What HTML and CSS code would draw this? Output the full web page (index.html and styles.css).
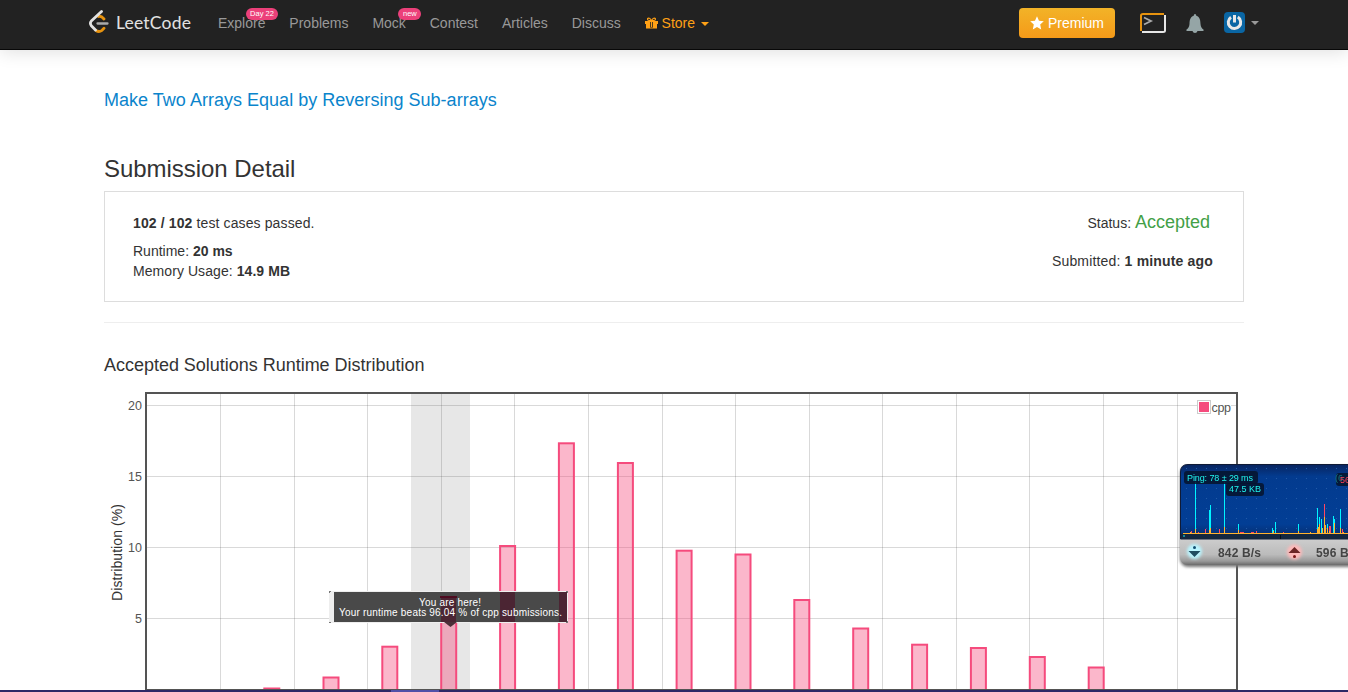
FILE: index.html
```html
<!DOCTYPE html>
<html lang="en">
<head>
<meta charset="utf-8">
<title>Submission Detail - LeetCode</title>
<link rel="stylesheet" href="styles.css">
</head>
<body>
<header class="navbar">
  <a class="brand">
    <svg class="brand-mark" width="22" height="26" viewBox="0 0 22 26" fill="none" stroke-linecap="round" stroke-linejoin="round" stroke-width="2.8">
      <path d="M10.500 8.500Q13 7.500 16 11M8 22.500Q11 24.500 14 22.300L16 20.300" stroke="#e7930f"/>
      <path d="M9.500 15.500H19.500" stroke="#aaa" stroke-width="2.300"/>
      <path d="M13.500 3.500L3.300 13Q1.500 15.300 3.300 17.700L7.500 22" stroke="#e2e2e2"/>
    </svg>
    <span class="brand-name">LeetCode</span>
  </a>
  <nav class="links">
    <a>Explore<span class="badge badge-day">Day 22</span></a>
    <a>Problems</a>
    <a>Mock<span class="badge badge-new">new</span></a>
    <a>Contest</a>
    <a>Articles</a>
    <a>Discuss</a>
    <a class="store">
      <svg width="13" height="12" viewBox="0 0 13 12"><path fill="#ffa116" fill-rule="evenodd" d="M0 4H4C1.500 4 1.300.5 3.500.5C5 .5 5.700 1.500 6.500 2.700C7.300 1.500 8 .5 9.500.5C11.700.5 11.500 4 9 4H13V7H12V11.500H1V7H0ZM3.700 1.800C2.800 1.800 2.900 3 4 3H5.500C5 2.400 4.500 1.800 3.700 1.800ZM9.300 1.800C8.500 1.800 8 2.400 7.500 3H9C10.100 3 10.200 1.800 9.300 1.800ZM5 5V10.500H8V5Z"/><path fill="#ffa116" d="M5.800 5H7.200V10H5.800Z"/></svg>
      <span>Store</span><i class="caret"></i>
    </a>
  </nav>
  <div class="tools">
    <a class="premium"><svg width="14" height="14" viewBox="0 0 14 14"><path fill="#fff" d="M7 .3L9 4.800L13.800 5.300L10.200 8.600L11.200 13.500L7 11L2.800 13.500L3.800 8.600L.2 5.300L5 4.800Z"/></svg>Premium</a>
    <svg class="console" width="26" height="22" viewBox="0 0 26 22" fill="none" stroke-width="2">
      <path d="M1 19V3.500Q1 2 3 2H24" stroke="#e7930f"/>
      <path d="M25 3V18.500Q25 20 23 20H2" stroke="#e6e6e6"/>
      <path d="M4 5.500L11 9L4 12.500" stroke="#aaa" stroke-width="1.800"/>
    </svg>
    <svg class="bell" width="18" height="20" viewBox="0 0 18 20"><path fill="#95a5a6" d="M9 0Q10.300 0 10.300 1.700C14 3 14.300 6 14.500 10C14.700 13 16 14.500 17.500 15.500V17H.5V15.500C2 14.500 3.300 13 3.500 10C3.700 6 4 3 7.700 1.700Q7.700 0 9 0ZM6.500 17H11.500Q11 19 9 19Q7 19 6.500 17Z"/></svg>
    <svg class="avatar" width="21" height="21" viewBox="0 0 21 21"><rect width="21" height="21" rx="4" fill="#0a66a4"/><path d="M7 5.200A6.200 6.200 0 1 0 13.800 5.100M10.500 3V10.500" fill="none" stroke="#e8e8e8" stroke-width="3"/></svg>
    <i class="caret caret-grey"></i>
  </div>
</header>

<main class="content">
  <h4 class="problem">Make Two Arrays Equal by Reversing Sub-arrays</h4>
  <h3 class="heading">Submission Detail</h3>
  <section class="detail">
    <div class="col">
      <p class="passed"><b>102 / 102</b> test cases passed.</p>
      <p>Runtime: <b>20 ms</b></p>
      <p class="memory">Memory Usage: <b>14.9 MB</b></p>
    </div>
    <div class="col col-right">
      <p class="status">Status: <span class="accepted">Accepted</span></p>
      <p class="submitted">Submitted: <b>1 minute ago</b></p>
    </div>
  </section>
  <hr class="rule">
  <h4 class="chart-title">Accepted Solutions Runtime Distribution</h4>
  <svg class="chart" width="1140" height="307" viewBox="104 385 1140 307">
    <rect x="411" y="394" width="59" height="298" fill="#e7e7e7"/>
    <path class="grid" d="M220.500 394V692M294.500 394V692M367.500 394V692M441.500 394V692M514.500 394V692M588.500 394V692M662.500 394V692M735.500 394V692M809.500 394V692M882.500 394V692M956.500 394V692M1029.500 394V692M1103.500 394V692M1177.500 394V692M147 405.500H1236M147 476.500H1236M147 547.500H1236M147 618.500H1236"/>
    <g class="bars">
      <rect x="264.300" y="688.500" width="15" height="20"/>
      <rect x="323.500" y="677.500" width="15" height="30"/>
      <rect x="382.300" y="646.700" width="15" height="60"/>
      <rect x="441.200" y="597.500" width="15" height="110"/>
      <rect x="500.100" y="546" width="15" height="160"/>
      <rect x="558.900" y="443.300" width="15" height="260"/>
      <rect x="617.900" y="463" width="15" height="240"/>
      <rect x="676.600" y="550.700" width="15" height="160"/>
      <rect x="735.500" y="554.500" width="15" height="160"/>
      <rect x="794.300" y="600" width="15" height="110"/>
      <rect x="853.200" y="628.500" width="15" height="90"/>
      <rect x="912.100" y="644.700" width="15" height="70"/>
      <rect x="970.900" y="648" width="15" height="60"/>
      <rect x="1029.800" y="657" width="15" height="60"/>
      <rect x="1088.700" y="667.500" width="15" height="50"/>
    </g>
    <rect x="146" y="393" width="1091" height="297" fill="none" stroke="#545454" stroke-width="2"/>
    <g class="ticks" text-anchor="end">
      <text x="142" y="410">20</text><text x="142" y="481">15</text><text x="142" y="552">10</text><text x="142" y="623">5</text>
    </g>
    <text class="axis" transform="translate(122 601) rotate(-90)" textLength="97">Distribution (%)</text>
    <rect x="1210" y="400" width="21" height="14" fill="#fff"/>
    <rect x="1197.500" y="400.500" width="13" height="13" fill="#fff" stroke="#ccc"/>
    <rect x="1199" y="402" width="10" height="10" fill="#f54b7d"/>
    <text class="ticks" x="1211.500" y="412" textLength="19.500">cpp</text>
    <g class="tip">
      <rect x="329" y="591" width="239" height="32" fill="#eee"/>
      <rect x="334" y="592" width="233" height="30" fill="#494949"/>
      <path d="M500 592h15v30h-15zM559 592h8v30h-8zM441 598h15v24h-15z" fill="#4b2533"/>
      <path d="M440 597H457" stroke="#4d0b20" stroke-width="2"/>
      <path d="M444 622H457L450.500 627Z" fill="#4b3039"/>
      <path d="M329 591.500h2M329.500 591v2M329 622.500h2M566 591.500h2M566 622.500h2M567.500 591v2M567.500 621v2" stroke="#777"/>
      <text x="419" y="606" textLength="62">You are here!</text>
      <text x="339" y="616" textLength="223">Your runtime beats 96.04 % of cpp submissions.</text>
    </g>
  </svg>
</main>

<!-- Desktop network meter -->
<svg class="meter" width="172" height="110" viewBox="1176 460 172 110">
  <defs>
    <linearGradient id="panel" x2="0" y2="1"><stop stop-color="#08245f"/><stop offset=".16" stop-color="#033b8f"/><stop offset=".8" stop-color="#023e95"/><stop offset="1" stop-color="#082a68"/></linearGradient>
    <linearGradient id="metal" gradientUnits="userSpaceOnUse" x1="0" x2="0" y1="539" y2="565"><stop stop-color="#cdcdcd"/><stop offset=".6" stop-color="#bbb"/><stop offset=".85" stop-color="#999"/><stop offset="1" stop-color="#6a6a6a"/></linearGradient>
    <pattern id="dots" x="1186" y="468" width="10" height="10" patternUnits="userSpaceOnUse"><rect width="1" height="1" fill="#2359a5"/></pattern>
    <filter id="shade" x="-10%" y="-10%" width="120%" height="130%"><feGaussianBlur stdDeviation="1.500"/></filter>
    <filter id="glow" x="-50%" y="-50%" width="200%" height="200%"><feGaussianBlur stdDeviation="1.500"/></filter>
  </defs>
  <rect x="1180" y="466" width="190" height="101" rx="8" fill="#777" filter="url(#shade)"/>
  <rect x="1180" y="464" width="190" height="101" rx="8" fill="url(#metal)"/>
  <path d="M1180.500 539V472Q1180.500 464.500 1188 464.500H1352V539Z" fill="url(#panel)" stroke="#101b36"/>
  <path d="M1184 468H1348V533H1184Z" fill="url(#dots)"/>
  <path d="M1181 534H1348V539H1181Z" fill="#13263f"/>
  <path d="M1183 535h2v2h-2z" fill="#168a99"/><path d="M1280 535h1v4h-1z" fill="#050b16"/>
  <path class="spikes" stroke="#00f5ff" d="M1195.500 482V533M1209.500 510V533M1210.500 505V533M1224.500 482V533M1238.500 524V533M1272.500 528V533M1273.500 530V533M1275.500 522V533M1298.500 524V533M1317.500 508V533M1319.500 517V533M1321.500 519V533M1327.500 524V533M1333.500 516V533M1334.500 519V533M1340.500 509V533"/>
  <path class="spikes" stroke="#ff4662" d="M1191.500 531V533M1198.500 532V533M1205.500 529V533M1219.500 529V533M1240 532.500H1244M1251 532.500H1254M1256.500 531V533M1283.500 532V533M1324.500 504V533M1329.500 526V533M1330.500 526V533M1342.500 529V533"/>
  <path class="spikes" stroke="#ffb22d" d="M1183 533.500H1348M1190.500 532V533M1195.500 529V533M1209.500 530V533M1210.500 528V533M1224.500 527V533M1238.500 530V533M1273.500 531V533M1298.500 531V533M1310.500 532V533M1317.500 529V533M1318.500 527V533M1319.500 524V533M1322.500 528V533M1324.500 517V533M1325.500 525V533M1327.500 528V533M1329.500 531V533M1334.500 523V533M1340.500 528V533M1343.500 532V533"/>
  <g fill="#06142d" fill-opacity=".88"><rect x="1184" y="471" width="74" height="13" rx="3"/><rect x="1226" y="483" width="38" height="13" rx="3"/><rect x="1336" y="473" width="20" height="13" rx="3"/></g>
  <g class="meter-data"><text x="1187" y="481" textLength="66">Ping: 78 ± 29 ms</text><text x="1229" y="492" textLength="32">47.5 KB</text><text x="1335" y="481" class="ghost">(6</text><text class="red" x="1340" y="483">56</text></g>
  <circle cx="1194.500" cy="551.500" r="7.500" fill="#baf5ff" filter="url(#glow)"/><circle cx="1194.500" cy="547.500" r="1.500" fill="#124e70"/><path d="M1188.500 551H1200.500L1194.500 557Z" fill="#204d61"/>
  <circle cx="1294.500" cy="552" r="7.500" fill="#ffb9b9" filter="url(#glow)"/><circle cx="1294.500" cy="556.500" r="1.500" fill="#7b1717"/><path d="M1288.500 553H1300.500L1294.500 547Z" fill="#6c2525"/>
  <g class="rates"><text x="1218" y="557" textLength="43">842 B/s</text><text x="1316" y="557" textLength="43">596 B/s</text></g>
</svg>
<div class="strip"><i></i></div>
</body>
</html>
```
FILE: styles.css
```css
* { box-sizing: border-box; }
html, body { height: 100%; }
body { margin: 0; overflow: hidden; background: #fff; color: #333; font: 14px/20px "Liberation Sans", Arial, sans-serif; }
h3, h4, p { margin: 0; font-weight: 400; }
.navbar { display: flex; height: 50px; padding: 0 89px 0 88px; background: #222; border-bottom: 1px solid #080808; box-shadow: 0 2px 18px rgba(0,0,0,.13); }
.brand { display: flex; width: 118px; padding-top: 8px; }
.brand-name { width: 80px; margin-left: 6px; padding-top: 5px; color: #e2e2e2; font: 400 17.500px/20px Lato, sans-serif; letter-spacing: .2px; }
.links { display: flex; flex: 1; color: #999; }
.links a { position: relative; padding: 13px 11.900px 0 12px; height: 49px; }
.badge { position: absolute; top: 8px; height: 12px; border-radius: 6px; background: #ec407a; color: #fff; font-size: 8px; line-height: 11px; text-align: center; }
.badge-day { left: 40px; width: 32px; font-size: 7.500px; }
.badge-new { left: 38px; width: 23px; font-size: 7.500px; }
.links .store { display: flex; color: #ffa116; }
.store svg { margin: 4px 4px 0 0; }
.caret { width: 0; height: 0; border: 4px solid transparent; border-top-color: currentColor; border-bottom: 0; margin: 9px 0 0 6px; }
.tools { display: flex; color: #fff; }
.premium { display: flex; width: 96px; height: 30px; margin-top: 8px; padding: 5px 11px; border-radius: 4px; background: linear-gradient(#f2b328, #f59a19); }
.premium svg { margin: 3px 4px 0 0; }
.console { margin: 12px 0 0 25px; }
.bell { margin: 14px 0 0 20px; }
.avatar { margin: 12px 0 0 20px; }
.caret-grey { margin-top: 21px; color: #999; }
.content { width: 1140px; margin: 0 auto; }
.problem { padding-top: 40px; color: #0a84cc; font-size: 18px; line-height: 20px; letter-spacing: .02px; }
.heading { padding-top: 46px; font-size: 24px; line-height: 26px; letter-spacing: -.04px; }
.detail { display: flex; justify-content: space-between; height: 111px; margin-top: 9px; padding: 21px 30px 0 28px; border: 1px solid #ddd; }
.passed { margin-bottom: 8px; letter-spacing: .12px; }
.memory { letter-spacing: .07px; }
.col-right { text-align: right; }
.status { padding-right: 3px; margin-bottom: 18px; line-height: 20px; }
.submitted { letter-spacing: .17px; }
.accepted { color: #43a047; font-size: 18px; line-height: 18px; }
.rule { height: 1px; margin: 20px 0 0; border: 0; background: #eee; }
.chart-title { padding-top: 32px; font-size: 18px; line-height: 20px; letter-spacing: -.02px; }
.chart { display: block; margin-top: 10px; }
.grid { fill: none; stroke: #545454; stroke-opacity: .22; }
.bars { fill: #f54b7d; fill-opacity: .4; stroke: #f54b7d; stroke-width: 2; }
.ticks { fill: #545454; font-size: 12.500px; }
.axis { fill: #333; font-size: 14px; }
.tip { fill: #fff; font-size: 10px; }
.meter { position: fixed; left: 1176px; top: 460px; }
.spikes { shape-rendering: crispEdges; }
.meter-data { fill: #20f5ee; font-size: 9px; }
.ghost { fill: #14777f; }
.red { fill: #ff4055; }
.rates { fill: #444; font-size: 12px; font-weight: 700; }
.strip { position: fixed; left: 0; right: 0; bottom: 0; height: 2px; background: #2c2966; }
.strip i { display: block; width: 48px; height: 2px; margin-left: 391px; background: #5050a8; }
```
